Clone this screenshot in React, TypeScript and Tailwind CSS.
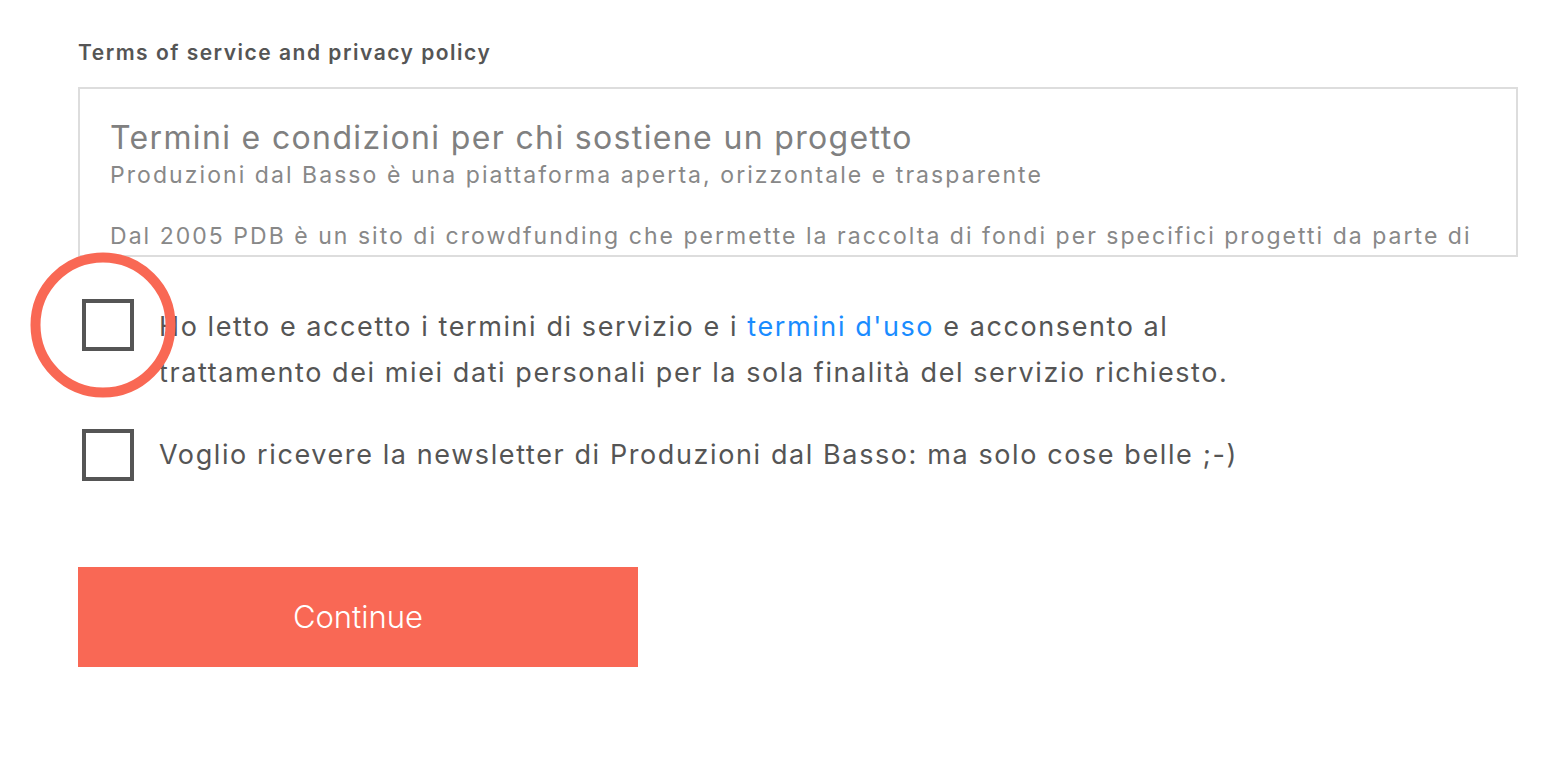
import React from "react";

export default function App() {
  return (
    <div className="min-h-[781px] w-[1552px] bg-white font-['Inter','Noto_Sans',sans-serif] text-[#555]">
      <div className="pl-[78px] pr-[34px] pt-[40px]">
        <div className="text-[21px] font-semibold leading-[26px] tracking-[1.5px] text-[#555]">
          Terms of service and privacy policy
        </div>
        <div className="mt-[21px] h-[170px] overflow-hidden border-2 border-[#dddddd] px-[30px] pt-[30px]">
          <div className="text-[32px] leading-[38px] tracking-[1.35px] text-[#808080]">
            Termini e condizioni per chi sostiene un progetto
          </div>
          <div className="mt-[3px] text-[23px] leading-[30px] tracking-[2.06px] text-[#888]">
            Produzioni dal Basso è una piattaforma aperta, orizzontale e trasparente
          </div>
          <div className="mt-[31px] text-[23px] leading-[30px] tracking-[2.03px] text-[#888]">
            Dal 2005 PDB è un sito di crowdfunding che permette la raccolta di fondi per specifici progetti da parte di
            singoli, associazioni, imprese e organizzazioni.
          </div>
        </div>

        <div className="relative mt-[42px] flex items-start gap-[25px] pl-[4px]">
          <div className="h-[52px] w-[52px] shrink-0 border-4 border-[#555]" />
          <div className="pt-[5px] text-[27px] leading-[46px] tracking-[1.58px] text-[#555]">
            Ho letto e accetto i termini di servizio e i{" "}
            <span className="text-[#1a8cff]">termini d'uso</span> e acconsento al
            <br />
            trattamento dei miei dati personali per la sola finalità del servizio richiesto.
          </div>
          <svg
            className="pointer-events-none absolute left-[-48px] top-[-47px]"
            width="146"
            height="146"
            viewBox="0 0 146 146"
          >
            <circle cx="73" cy="73" r="67.5" fill="none" stroke="#f96854" strokeWidth="10" />
          </svg>
        </div>

        <div className="mt-[33px] flex items-center gap-[25px] pl-[4px]">
          <div className="h-[52px] w-[52px] shrink-0 border-4 border-[#555]" />
          <div className="text-[27px] leading-[46px] tracking-[1.6px] text-[#555]">
            Voglio ricevere la newsletter di Produzioni dal Basso: ma solo cose belle ;-)
          </div>
        </div>

        <button className="mt-[86px] flex h-[100px] w-[560px] items-center justify-center bg-[#f96855] text-[31px] font-light text-white">
          Continue
        </button>
      </div>
    </div>
  );
}
